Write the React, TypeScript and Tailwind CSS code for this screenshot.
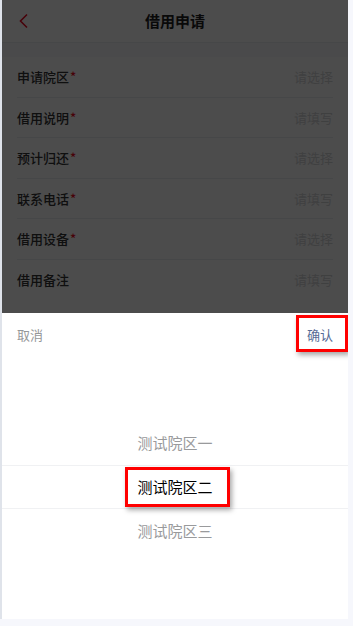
const rows = [
  { label: "申请院区", required: true, hint: "请选择" },
  { label: "借用说明", required: true, hint: "请填写" },
  { label: "预计归还", required: true, hint: "请选择" },
  { label: "联系电话", required: true, hint: "请填写" },
  { label: "借用设备", required: true, hint: "请选择" },
  { label: "借用备注", required: false, hint: "请填写" },
];

const options = ["测试院区一", "测试院区二", "测试院区三"];

export default function App() {
  return (
    <div
      className="h-[626px] w-[353px] overflow-hidden bg-[#f6f7fc]"
      style={{ fontFamily: '"Noto Sans CJK SC", "Noto Sans", sans-serif' }}
    >
      <div className="flex h-[619px]">
        <div className="w-[2px] bg-[#dfe3ea]" />
        <div className="relative h-[619px] w-[346px] overflow-hidden bg-white">
          {/* page under the mask */}
          <header className="relative flex h-[43px] items-center justify-center border-b border-[#ebedf0]">
            <svg
              className="absolute left-[16px] top-[13px]"
              width="12"
              height="16"
              viewBox="0 0 12 16"
              fill="none"
              stroke="#ee0a24"
              strokeWidth="1.6"
            >
              <path d="M9 1.5 L2.5 8 L9 14.5" />
            </svg>
            <h1 className="text-[15px] font-semibold text-[#1f1f1f]">借用申请</h1>
          </header>
          <div className="h-[14px] bg-[#f7f8fa]" />
          <div className="px-[15px]">
            {rows.map((r, i) => (
              <div
                key={r.label}
                className={
                  "flex h-[40.5px] items-center justify-between text-[13px] " +
                  (i < rows.length - 1 ? "border-b border-[#ebedf0]" : "")
                }
              >
                <span className="font-medium text-[#323233]">
                  {r.label}
                  {r.required && <span className="ml-[1px] text-[#ee0a24]">*</span>}
                </span>
                <span className="text-[#d4d5d8]">{r.hint}</span>
              </div>
            ))}
          </div>

          {/* mask */}
          <div className="absolute inset-0 bg-black/70" />

          {/* picker popup */}
          <div className="absolute bottom-0 left-0 right-0 h-[306px] bg-white">
            <div className="flex h-[44px] items-center justify-between px-[15px] text-[13px]">
              <span className="text-[#969799]">取消</span>
              <span className="text-[#576b95]">确认</span>
            </div>
            <div className="relative h-[262px]">
              <div className="h-[64px]" />
              {options.map((o, i) => (
                <div
                  key={o}
                  className={
                    "flex h-[44px] items-center justify-center text-[15px] " +
                    (i === 1 ? "text-[#000000]" : "text-[#999a9c]")
                  }
                >
                  {o}
                </div>
              ))}
              <div className="pointer-events-none absolute left-0 right-0 top-[108px] h-[44px] border-y border-[#f0f1f3]" />
            </div>
            <div className="absolute left-[123px] top-[154px] h-[40px] w-[105px] border-[3px] border-[#ff0000] shadow-[2px_3px_5px_rgba(0,0,0,0.35)]" />
            <div className="absolute left-[294px] top-[2px] h-[37px] w-[52px] border-[3px] border-[#ff0000] shadow-[2px_3px_5px_rgba(0,0,0,0.35)]" />
          </div>
        </div>
      </div>
    </div>
  );
}
